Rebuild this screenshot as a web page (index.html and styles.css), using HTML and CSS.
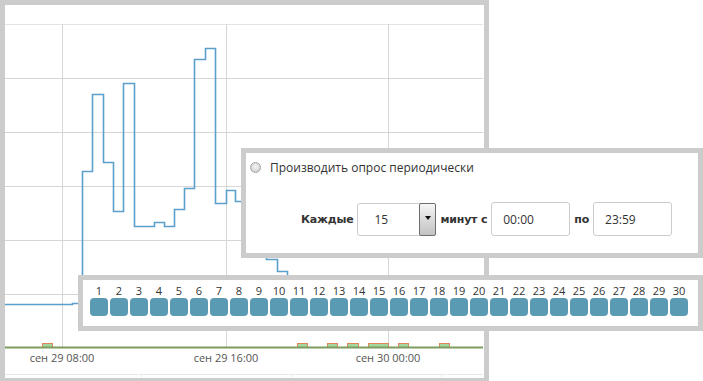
FILE: index.html
```html
<!DOCTYPE html>
<html lang="ru">
<head>
  <meta charset="UTF-8">
  <title>Опрос</title>
  <link rel="stylesheet" href="styles.css">
</head>
<body>
  <div class="page">
    <!-- график -->
    <div class="chart">
      <svg class="chart-svg" viewBox="5 5 478 372" width="478" height="372">
        <g class="grid">
          <line x1="5" y1="24.5" x2="483" y2="24.5" class="grid-top"/>
          <line x1="5" y1="78.5" x2="483" y2="78.5"/>
          <line x1="5" y1="132.5" x2="483" y2="132.5"/>
          <line x1="5" y1="186.5" x2="483" y2="186.5"/>
          <line x1="5" y1="240.5" x2="483" y2="240.5"/>
          <line x1="5" y1="294.5" x2="483" y2="294.5"/>
          <line x1="62.5" y1="24" x2="62.5" y2="347"/>
          <line x1="226.5" y1="24" x2="226.5" y2="347"/>
          <line x1="388.5" y1="24" x2="388.5" y2="347"/>
        </g>
        <polyline class="series" points="5,304.5 72.5,304.5 72.5,303.5 82.5,303.5 82.5,171.5 92.5,171.5 92.5,94.5 103.5,94.5 103.5,162.5 113.5,162.5 113.5,211.5 123.5,211.5 123.5,83.5 134.5,83.5 134.5,226.5 154.5,226.5 154.5,222.5 164.5,222.5 164.5,226.5 174.5,226.5 174.5,209.5 184.5,209.5 184.5,188.5 194.5,188.5 194.5,59.5 205.5,59.5 205.5,48.5 215.5,48.5 215.5,203.5 226.5,203.5 226.5,190.5 235.5,190.5 235.5,201.5 246.5,201.5 246.5,230 266.5,230 266.5,259.5 277.5,259.5 277.5,271.5 287.5,271.5 287.5,295"/>
        <g class="marks">
          <rect x="42.5" y="343.5" width="10" height="4"/>
          <rect x="297.5" y="343.5" width="10" height="4"/>
          <rect x="327.5" y="343.5" width="10" height="4"/>
          <rect x="347.5" y="343.5" width="11" height="4"/>
          <rect x="368.5" y="343.5" width="20" height="4"/>
          <rect x="398.5" y="343.5" width="10" height="4"/>
          <rect x="439.5" y="343.5" width="10" height="4"/>
        </g>
        <line class="baseline" x1="5" y1="347.5" x2="483" y2="347.5"/>
        <g class="axis-labels">
          <text x="62" y="362">сен 29 08:00</text>
          <text x="226" y="362">сен 29 16:00</text>
          <text x="388" y="362">сен 30 00:00</text>
        </g>
        <g class="nav">
          <line x1="5" y1="374.5" x2="483" y2="374.5"/>
          <line x1="141.5" y1="374" x2="141.5" y2="377"/>
          <line x1="291.5" y1="374" x2="291.5" y2="377"/>
          <line x1="441.5" y1="374" x2="441.5" y2="377"/>
        </g>
      </svg>
    </div>

    <!-- настройки опроса -->
    <div class="dialog">
      <label class="radio-row">
        <span class="radio"></span>
        <span class="radio-text">Производить опрос периодически</span>
      </label>
      <div class="form-row">
        <span class="form-label">Каждые</span>
        <div class="select">
          <span class="select-value">15</span>
          <span class="select-arrow"><span class="caret"></span></span>
        </div>
        <span class="form-label">минут с</span>
        <input class="field" type="text" value="00:00" readonly>
        <span class="form-label">по</span>
        <input class="field" type="text" value="23:59" readonly>
      </div>
    </div>

    <!-- дни месяца -->
    <div class="days" id="days"></div>
  </div>

  <script>
    // заполняем дни 1..30
    const days = document.getElementById("days");
    for (let i = 1; i <= 30; i++) {
      const cell = document.createElement("div");
      cell.className = "day";
      cell.innerHTML = '<span class="day-num">' + i + '</span><span class="day-btn"></span>';
      days.appendChild(cell);
    }
  </script>
</body>
</html>
```

FILE: styles.css
```css
/* базовые */
* {
  box-sizing: border-box;
}

body {
  margin: 0;
  background: #ffffff;
  font-family: "Open Sans", "DejaVu Sans", sans-serif;
  color: #333333;
}

.page {
  position: relative;
  width: 703px;
  height: 381px;
  overflow: hidden;
}

/* график */
.chart {
  width: 489px;
  height: 382px;
  border: 5px solid #cccccc;
  border-bottom-width: 4px;
  background: #ffffff;
}

.chart-svg {
  display: block;
}

.grid line {
  stroke: #d6d6d6;
  stroke-width: 1;
}

.grid .grid-top {
  stroke: #e4e4e4;
}

.series {
  fill: none;
  stroke: #5b9fcd;
  stroke-width: 1.6;
}

.marks rect {
  fill: #a4d6a0;
  stroke: #e2845a;
  stroke-width: 1;
}

.baseline {
  stroke: #7c9c5c;
  stroke-width: 2;
}

.axis-labels text {
  font-family: "Open Sans", sans-serif;
  font-size: 11px;
  fill: #555555;
  text-anchor: middle;
}

.nav line {
  stroke: #e8e8e8;
  stroke-width: 1;
}

/* диалог */
.dialog {
  position: absolute;
  left: 241px;
  top: 148px;
  width: 462px;
  height: 110px;
  border: 5px solid #cccccc;
  background: #ffffff;
  padding: 7px 0 0 4px;
}

.radio-row {
  display: flex;
  align-items: center;
  gap: 9px;
  height: 15px;
}

.radio {
  flex-shrink: 0;
  width: 11px;
  height: 11px;
  border-radius: 50%;
  border: 1px solid #a4a4a4;
  background: radial-gradient(circle at 50% 40%, #f4f4f4 0%, #d8d8d8 65%, #c2c2c2 100%);
}

.radio-text {
  font-size: 12px;
  color: #333333;
}

.form-row {
  display: flex;
  align-items: center;
  gap: 4px;
  margin-top: 27px;
  padding-left: 51px;
  height: 34px;
}

.form-label {
  font-family: "DejaVu Sans", sans-serif;
  font-weight: bold;
  font-size: 11px;
  letter-spacing: -0.2px;
  color: #333333;
}

.select {
  display: flex;
  flex-shrink: 0;
  width: 79px;
  height: 33px;
  border: 1px solid #cccccc;
  border-radius: 3px;
  background: #ffffff;
}

.select-value {
  flex: 1;
  display: flex;
  align-items: center;
  padding-left: 16px;
  font-size: 12px;
}

.select-arrow {
  width: 17px;
  margin: -1px -1px -1px 0;
  border: 1px solid #6e6e6e;
  border-radius: 2px;
  background: linear-gradient(#f6f6f6, #d8d8d8 55%, #c2c2c2);
  display: flex;
  align-items: center;
  justify-content: center;
  padding-bottom: 3px;
}

.caret {
  width: 0;
  height: 0;
  border-left: 3px solid transparent;
  border-right: 3px solid transparent;
  border-top: 4px solid #111111;
}

.field {
  flex-shrink: 0;
  width: 79px;
  height: 34px;
  border: 1px solid #cccccc;
  border-radius: 3px;
  padding: 0 0 0 11px;
  margin: 0;
  font-family: "Open Sans", sans-serif;
  font-size: 12px;
  color: #333333;
  background: #ffffff;
  outline: none;
}

/* дни */
.days {
  position: absolute;
  left: 78px;
  top: 275px;
  width: 625px;
  height: 56px;
  border: 5px solid #cccccc;
  background: #ffffff;
  padding: 3px 0 0 7px;
  display: flex;
  gap: 2px;
}

.day {
  width: 18px;
  display: flex;
  flex-direction: column;
  align-items: center;
}

.day-num {
  height: 15px;
  line-height: 15px;
  font-size: 11px;
  color: #333333;
  white-space: nowrap;
}

.day-btn {
  width: 18px;
  height: 18px;
  border-radius: 4px;
  background: #5a9bb3;
}
```
